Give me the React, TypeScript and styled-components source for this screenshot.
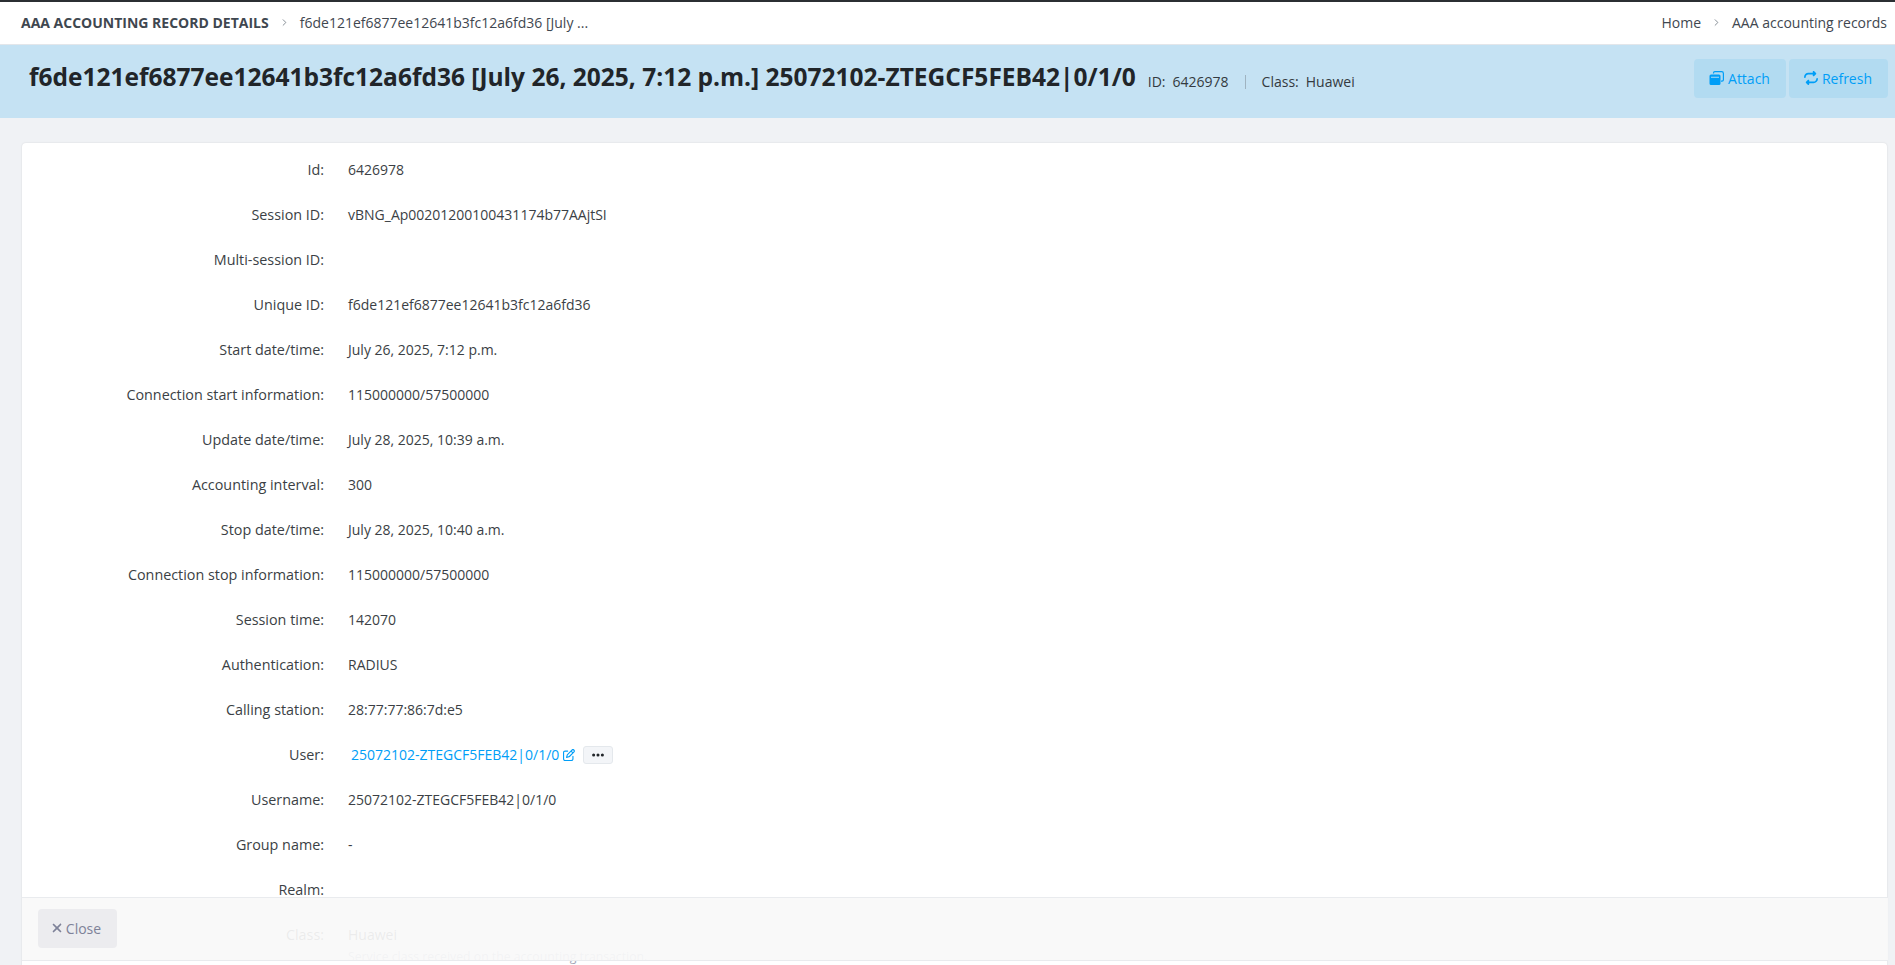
import { createGlobalStyle, styled } from "styled-components";
import { FaRegPenToSquare, FaRepeat, FaXmark, FaEllipsis } from "react-icons/fa6";
import { FiChevronRight } from "react-icons/fi";

const GlobalStyle = createGlobalStyle`
  html, body {
    margin: 0;
    height: 100%;
    overflow: hidden;
    background: #f0f2f5;
    font-family: "Open Sans", "Noto Sans", sans-serif;
    font-size: 14px;
    color: #212529;
  }
`;

const Page = styled.div`
  position: relative;
  height: 965px;
  overflow: hidden;
`;

const TopBar = styled.header`
  display: flex;
  align-items: center;
  justify-content: space-between;
  height: 45px;
  box-sizing: border-box;
  padding: 0 8px 2px 21px;
  background: #fff;
  border-top: 2px solid #2b2f33;
  border-bottom: 1px solid #e3e6ea;
`;

const Crumbs = styled.div`
  display: flex;
  align-items: center;
  gap: 10px;
`;

const PageName = styled.span`
  font-weight: 700;
  color: #3f4750;
  text-transform: uppercase;
`;

const Crumb = styled.span`
  color: #3f4750;
`;

const Separator = styled(FiChevronRight)`
  color: #7d858d;
  font-size: 11px;
`;

const TitleBand = styled.section`
  display: flex;
  align-items: center;
  height: 73px;
  padding: 0 7px 0 29px;
  background: #c5e2f3;
`;

const Title = styled.h1`
  margin: -11px 12px 0 0;
  font-size: 24.5px;
  font-weight: 700;
  color: #212529;
  white-space: nowrap;
`;

const Meta = styled.span`
  display: flex;
  gap: 7px;
  color: #343a40;
`;

const MetaDivider = styled.span`
  width: 1px;
  height: 14px;
  margin: 0 16px;
  background: #9fb3c0;
`;

const Actions = styled.div`
  display: flex;
  gap: 3px;
  margin-left: auto;
  margin-top: -7px;
`;

const ActionButton = styled.button`
  display: flex;
  align-items: center;
  gap: 4px;
  height: 39px;
  padding: 0 16px 0 15px;
  border: 0;
  border-radius: 4px;
  background: #b2dbf1;
  color: #009ef7;
  font: inherit;
`;

const Content = styled.main`
  padding: 25px 8px 0 22px;
`;

const Card = styled.div`
  padding: 5px 0 0;
  background: #fff;
  border-radius: 4px;
  box-shadow: 0 0 2px rgba(0, 0, 0, 0.12);
`;

const Row = styled.div`
  display: grid;
  grid-template-columns: 302px 1fr;
  column-gap: 24px;
  min-height: 45px;
  align-items: start;
  padding-top: 11px;
  box-sizing: border-box;
  line-height: 22px;
`;

const Label = styled.div`
  text-align: right;
  font-size: 14.35px;
  color: #3b3f45;
`;

const Value = styled.div`
  color: #3b3f45;
  display: flex;
  align-items: center;
`;

const Help = styled.div`
  color: #a1a5b7;
  font-size: 12.25px;
`;

const UserLink = styled.a`
  display: inline-flex;
  align-items: center;
  gap: 4px;
  margin-left: 3px;
  color: #009ef7;

  svg {
    font-size: 12px;
  }
`;

const MoreButton = styled.button`
  display: inline-flex;
  align-items: center;
  justify-content: center;
  width: 30px;
  height: 18px;
  margin-left: 8px;
  padding: 0;
  border: 1px solid #e4e8ec;
  border-radius: 3px;
  background: #f3f5f8;
  color: #212529;
  font-size: 14px;
`;

const Footer = styled.footer`
  position: absolute;
  left: 22px;
  right: 7px;
  top: 897px;
  height: 64px;
  display: flex;
  align-items: center;
  padding: 0 0 2px 16px;
  box-sizing: border-box;
  background: rgba(249, 249, 249, 0.93);
  border-top: 1px solid #e9ebee;
  border-bottom: 1px solid #e9ebee;
`;

const CloseButton = styled.button`
  display: flex;
  align-items: center;
  gap: 2px;
  height: 39px;
  width: 79px;
  padding: 0 4px 0 0;
  justify-content: center;
  border: 0;
  border-radius: 4px;
  background: #ececef;
  color: #7e8299;
  font: inherit;
`;

const AttachIcon = () => (
  <svg width="15" height="14" viewBox="0 0 15 14" aria-hidden="true">
    <path d="M4.500 2.600V2a1.400 1.400 0 0 1 1.400-1.400h6.700A1.800 1.800 0 0 1 14.400 2.400v6.400A1.400 1.400 0 0 1 13 10.200h-1" fill="none" stroke="currentColor" strokeWidth="1.200" />
    <path fillRule="evenodd" fill="currentColor" d="M2 3.500h8A1.500 1.500 0 0 1 11.500 5v7.500A1.500 1.500 0 0 1 10 14H2a1.500 1.500 0 0 1-1.500-1.500V5A1.500 1.500 0 0 1 2 3.500Zm0 2.300v.9h8v-.9Z" />
  </svg>
);

const rows: [string, string][] = [
  ["Id", "6426978"],
  ["Session ID", "vBNG_Ap00201200100431174b77AAjtSI"],
  ["Multi-session ID", ""],
  ["Unique ID", "f6de121ef6877ee12641b3fc12a6fd36"],
  ["Start date/time", "July 26, 2025, 7:12 p.m."],
  ["Connection start information", "115000000/57500000"],
  ["Update date/time", "July 28, 2025, 10:39 a.m."],
  ["Accounting interval", "300"],
  ["Stop date/time", "July 28, 2025, 10:40 a.m."],
  ["Connection stop information", "115000000/57500000"],
  ["Session time", "142070"],
  ["Authentication", "RADIUS"],
  ["Calling station", "28:77:77:86:7d:e5"],
];

const App = () => {
  return (
    <Page>
      <GlobalStyle />
      <TopBar>
        <Crumbs>
          <PageName>AAA accounting record details</PageName>
          <Separator />
          <Crumb>f6de121ef6877ee12641b3fc12a6fd36 [July ...</Crumb>
        </Crumbs>
        <Crumbs>
          <Crumb>Home</Crumb>
          <Separator />
          <Crumb>AAA accounting records</Crumb>
        </Crumbs>
      </TopBar>
      <TitleBand>
        <Title>f6de121ef6877ee12641b3fc12a6fd36 [July 26, 2025, 7:12 p.m.] 25072102-ZTEGCF5FEB42|0/1/0</Title>
        <Meta>
          <span>ID:</span>
          <span>6426978</span>
        </Meta>
        <MetaDivider />
        <Meta>
          <span>Class:</span>
          <span>Huawei</span>
        </Meta>
        <Actions>
          <ActionButton>
            <AttachIcon />
            Attach
          </ActionButton>
          <ActionButton>
            <FaRepeat />
            Refresh
          </ActionButton>
        </Actions>
      </TitleBand>
      <Content>
        <Card>
          {rows.map(([label, value]) => (
            <Row key={label}>
              <Label>{label}:</Label>
              <Value>{value}</Value>
            </Row>
          ))}
          <Row>
            <Label>User:</Label>
            <Value>
              <UserLink>
                25072102-ZTEGCF5FEB42|0/1/0
                <FaRegPenToSquare />
              </UserLink>
              <MoreButton>
                <FaEllipsis />
              </MoreButton>
            </Value>
          </Row>
          <Row>
            <Label>Username:</Label>
            <Value>25072102-ZTEGCF5FEB42|0/1/0</Value>
          </Row>
          <Row>
            <Label>Group name:</Label>
            <Value>-</Value>
          </Row>
          <Row>
            <Label>Realm:</Label>
            <Value />
          </Row>
          <Row>
            <Label>Class:</Label>
            <div>
              <Value>Huawei</Value>
              <Help>Service class received on the accounting transaction.</Help>
            </div>
          </Row>
        </Card>
      </Content>
      <Footer>
        <CloseButton>
          <FaXmark />
          Close
        </CloseButton>
      </Footer>
    </Page>
  );
};

export default App;
